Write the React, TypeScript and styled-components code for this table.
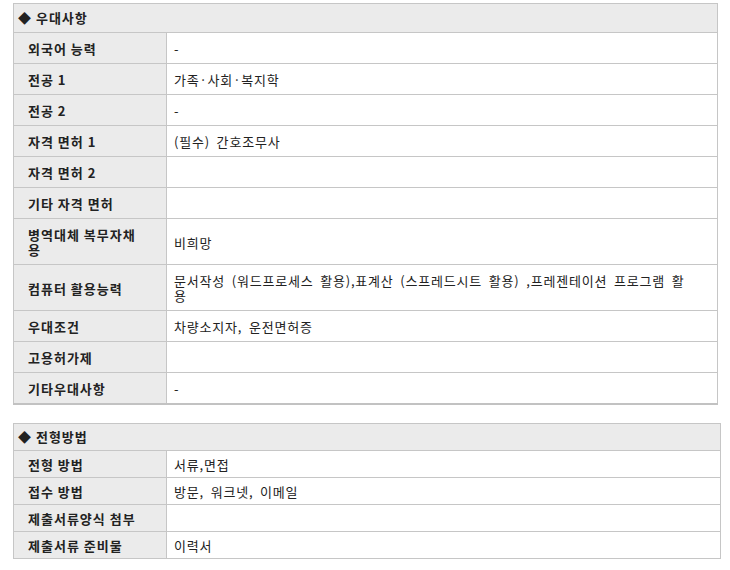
import React from "react";
import styled, { createGlobalStyle } from "styled-components";

const Global = createGlobalStyle`
  html, body { margin: 0; padding: 0; background: #ffffff; }
  body {
    font-family: "Noto Sans CJK KR", "Noto Sans", "Liberation Sans", sans-serif;
    font-size: 13px;
    color: #222222;
  }
`;

const Page = styled.div`
  padding: 3px 0 0 13px;
  display: flex;
  flex-direction: column;
  align-items: flex-start;
  gap: 18px;
`;

const Table = styled.table<{ $width: number; $thickBottom?: boolean }>`
  width: ${(p) => p.$width}px;
  border-collapse: collapse;
  table-layout: fixed;
  border: 1px solid #c6c6c6;
  ${(p) => (p.$thickBottom ? "border-bottom: 2px solid #c2c2c2;" : "")}
`;

const Col = styled.col<{ $w?: number }>`
  ${(p) => (p.$w ? `width: ${p.$w}px;` : "")}
`;

const HeaderCell = styled.th<{ $pad: number }>`
  background: #ebebeb;
  text-align: left;
  font-weight: bold;
  letter-spacing: 1px;
  line-height: 16px;
  padding: ${(p) => p.$pad}px 4px ${(p) => p.$pad}px 4px;
  border: 1px solid #c6c6c6;
`;

const LabelCell = styled.th<{ $padTop: number; $padBottom: number }>`
  background: #ebebeb;
  text-align: left;
  font-weight: bold;
  letter-spacing: 1px;
  line-height: 15px;
  padding: ${(p) => p.$padTop}px 20px ${(p) => p.$padBottom}px 14px;
  border: 1px solid #c6c6c6;
  vertical-align: middle;
`;

const ValueCell = styled.td<{ $padTop: number; $padBottom: number }>`
  background: #ffffff;
  line-height: 15px;
  letter-spacing: 0.8px;
  word-spacing: 3px;
  padding: ${(p) => p.$padTop}px 30px ${(p) => p.$padBottom}px 7px;
  border: 1px solid #c6c6c6;
  vertical-align: middle;
  word-break: break-all;
`;

type Row = [string, string];

const prefs: Row[] = [
  ["외국어 능력", "-"],
  ["전공 1", "가족·사회·복지학"],
  ["전공 2", "-"],
  ["자격 면허 1", "(필수) 간호조무사"],
  ["자격 면허 2", ""],
  ["기타 자격 면허", ""],
  ["병역대체 복무자채용", "비희망"],
  [
    "컴퓨터 활용능력",
    "문서작성 (워드프로세스 활용),표계산 (스프레드시트 활용)  ,프레젠테이션 프로그램 활용",
  ],
  ["우대조건", "차량소지자, 운전면허증"],
  ["고용허가제", ""],
  ["기타우대사항", "-"],
];

const methods: Row[] = [
  ["전형 방법", "서류,면접"],
  ["접수 방법", "방문, 워크넷, 이메일"],
  ["제출서류양식 첨부", ""],
  ["제출서류 준비물", "이력서"],
];

function Section({
  title,
  rows,
  width,
  padTop,
  padBottom,
  headPad,
  thickBottom,
}: {
  title: string;
  rows: Row[];
  width: number;
  padTop: number;
  padBottom: number;
  headPad: number;
  thickBottom?: boolean;
}) {
  return (
    <Table $width={width} $thickBottom={thickBottom}>
      <colgroup>
        <Col $w={153} />
        <Col />
      </colgroup>
      <thead>
        <tr>
          <HeaderCell colSpan={2} $pad={headPad}>
            ◆ {title}
          </HeaderCell>
        </tr>
      </thead>
      <tbody>
        {rows.map(([k, v]) => (
          <tr key={k}>
            <LabelCell $padTop={padTop} $padBottom={padBottom}>
              {k}
            </LabelCell>
            <ValueCell $padTop={padTop} $padBottom={padBottom}>
              {v || "\u00a0"}
            </ValueCell>
          </tr>
        ))}
      </tbody>
    </Table>
  );
}

export default function App() {
  return (
    <>
      <Global />
      <Page>
        <Section
          title="우대사항"
          rows={prefs}
          width={705}
          padTop={8}
          padBottom={7}
          headPad={6}
          thickBottom
        />
        <Section
          title="전형방법"
          rows={methods}
          width={708}
          padTop={6}
          padBottom={5}
          headPad={5}
        />
      </Page>
    </>
  );
}
